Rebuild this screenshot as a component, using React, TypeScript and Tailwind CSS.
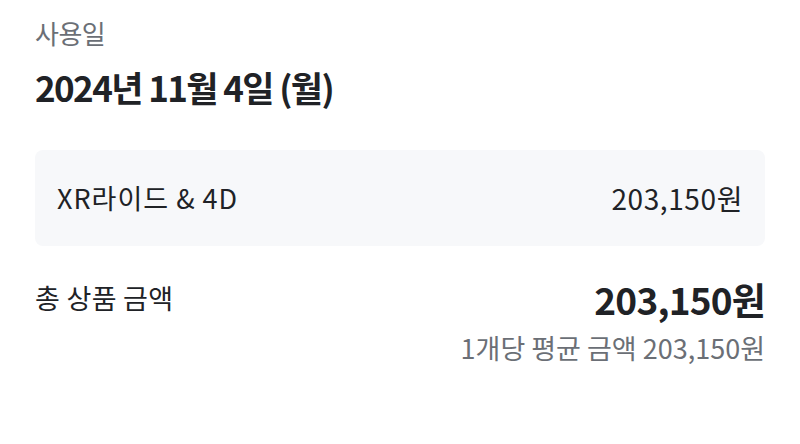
const App = () => {
  return (
    <div
      className="w-[800px] h-[444px] bg-white px-[35px] pt-[14px]"
      style={{ fontFamily: '"Noto Sans CJK KR", "Noto Sans", sans-serif' }}
    >
      <div className="text-[26px] leading-[38px] text-[#6b6f76] tracking-[-0.5px]">사용일</div>
      <div className="mt-[11px] text-[35px] leading-[48px] font-bold text-[#202226] tracking-[-1.6px]">
        2024년 11월 4일 (월)
      </div>

      <div className="mt-[39px] h-[96px] rounded-[8px] bg-[#f7f8fa] px-[22px] flex items-center justify-between">
        <span className="text-[27px] text-[#202226] tracking-[1px]">XR라이드 &amp; 4D</span>
        <span className="text-[28px] text-[#202226] tracking-[0.6px]">203,150원</span>
      </div>

      <div className="mt-[32px] flex justify-between items-start">
        <span className="text-[27px] leading-[40px] text-[#202226] tracking-[0.3px]">총 상품 금액</span>
        <div className="flex flex-col items-end">
          <span className="text-[37px] leading-[42px] font-bold text-[#202226] tracking-[-0.8px]">203,150원</span>
          <span className="mt-[10px] text-[27px] leading-[36px] text-[#6b6f76] tracking-[0px]">
            1개당 평균 금액 203,150원
          </span>
        </div>
      </div>
    </div>
  );
};

export default App;
